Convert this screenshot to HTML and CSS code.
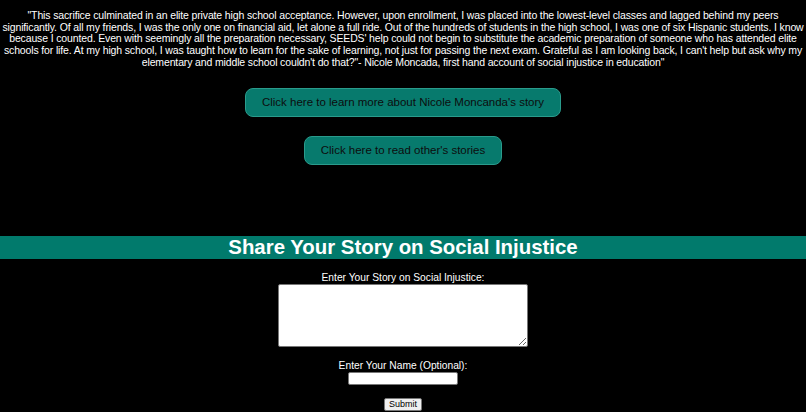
FILE: index.html
```html
<!DOCTYPE html>
<html lang="en">
<head>
<meta charset="utf-8">
<title>Share Your Story</title>
<link rel="stylesheet" href="styles.css">
</head>
<body>
<main class="page">
  <p class="quote">"This sacrifice culminated in an elite private high school acceptance. However, upon enrollment, I was placed into the lowest-level classes and lagged behind my peers<br>significantly. Of all my friends, I was the only one on financial aid, let alone a full ride. Out of the hundreds of students in the high school, I was one of six Hispanic students. I know<br>because I counted. Even with seemingly all the preparation necessary, SEEDS' help could not begin to substitute the academic preparation of someone who has attended elite<br>schools for life. At my high school, I was taught how to learn for the sake of learning, not just for passing the next exam. Grateful as I am looking back, I can't help but ask why my<br>elementary and middle school couldn't do that?"- Nicole Moncada, first hand account of social injustice in education"</p>
  <div class="actions">
    <a class="pill" href="#">Click here to learn more about Nicole Moncanda's story</a>
    <a class="pill" href="#">Click here to read other's stories</a>
  </div>
  <h2 class="band">Share Your Story on Social Injustice</h2>
  <form class="story-form">
    <label class="field-label" for="story">Enter Your Story on Social Injustice:</label>
    <textarea id="story" class="story-box"></textarea>
    <label class="field-label name-label" for="name">Enter Your Name (Optional):</label>
    <input id="name" class="name-box" type="text">
    <button class="submit" type="button">Submit</button>
  </form>
</main>
</body>
</html>
```
FILE: styles.css
```css
html, body {
  margin: 0;
  padding: 0;
  background: #000;
  overflow: hidden;
}
body {
  color: #fff;
  font-family: "Liberation Sans", Arial, sans-serif;
}
.page {
  display: flex;
  flex-direction: column;
}
.quote {
  margin: 10px -30px 0;
  font-size: 10.5px;
  letter-spacing: -0.14px;
  line-height: 11.7px;
  text-align: center;
}
.actions {
  display: flex;
  flex-direction: column;
  align-items: center;
  gap: 19px;
  margin-top: 19px;
}
.pill {
  display: block;
  box-sizing: border-box;
  height: 29px;
  line-height: 27px;
  padding: 0 16px;
  background: #077a6d;
  border: 1px solid #2a9b8c;
  border-radius: 8px;
  color: #0d0d0d;
  font-size: 11.5px;
  text-decoration: none;
}
.band {
  margin: 71px 0 0;
  background: #017a6c;
  color: #fff;
  font-size: 20.4px;
  line-height: 23px;
  font-weight: bold;
  text-align: center;
}
.story-form {
  display: flex;
  flex-direction: column;
  align-items: center;
  margin-top: 13px;
}
.field-label {
  font-size: 10.25px;
  line-height: 12px;
}
.story-box {
  box-sizing: border-box;
  width: 250px;
  height: 63px;
  margin-top: 0;
  border: 1px solid #777;
  border-radius: 2px;
  background: #fff;
}
.name-label {
  margin-top: 13px;
}
.name-box {
  box-sizing: border-box;
  width: 110px;
  height: 13px;
  margin-top: 0;
  padding: 0;
  border: 1px solid #777;
  border-radius: 2px;
  background: #fff;
}
.submit {
  box-sizing: border-box;
  width: 38px;
  height: 13px;
  margin-top: 13px;
  padding: 0;
  border: 1px solid #777;
  border-radius: 2px;
  background: #efefef;
  color: #000;
  font-family: "Liberation Sans", Arial, sans-serif;
  font-size: 9px;
  line-height: 11px;
}
```
